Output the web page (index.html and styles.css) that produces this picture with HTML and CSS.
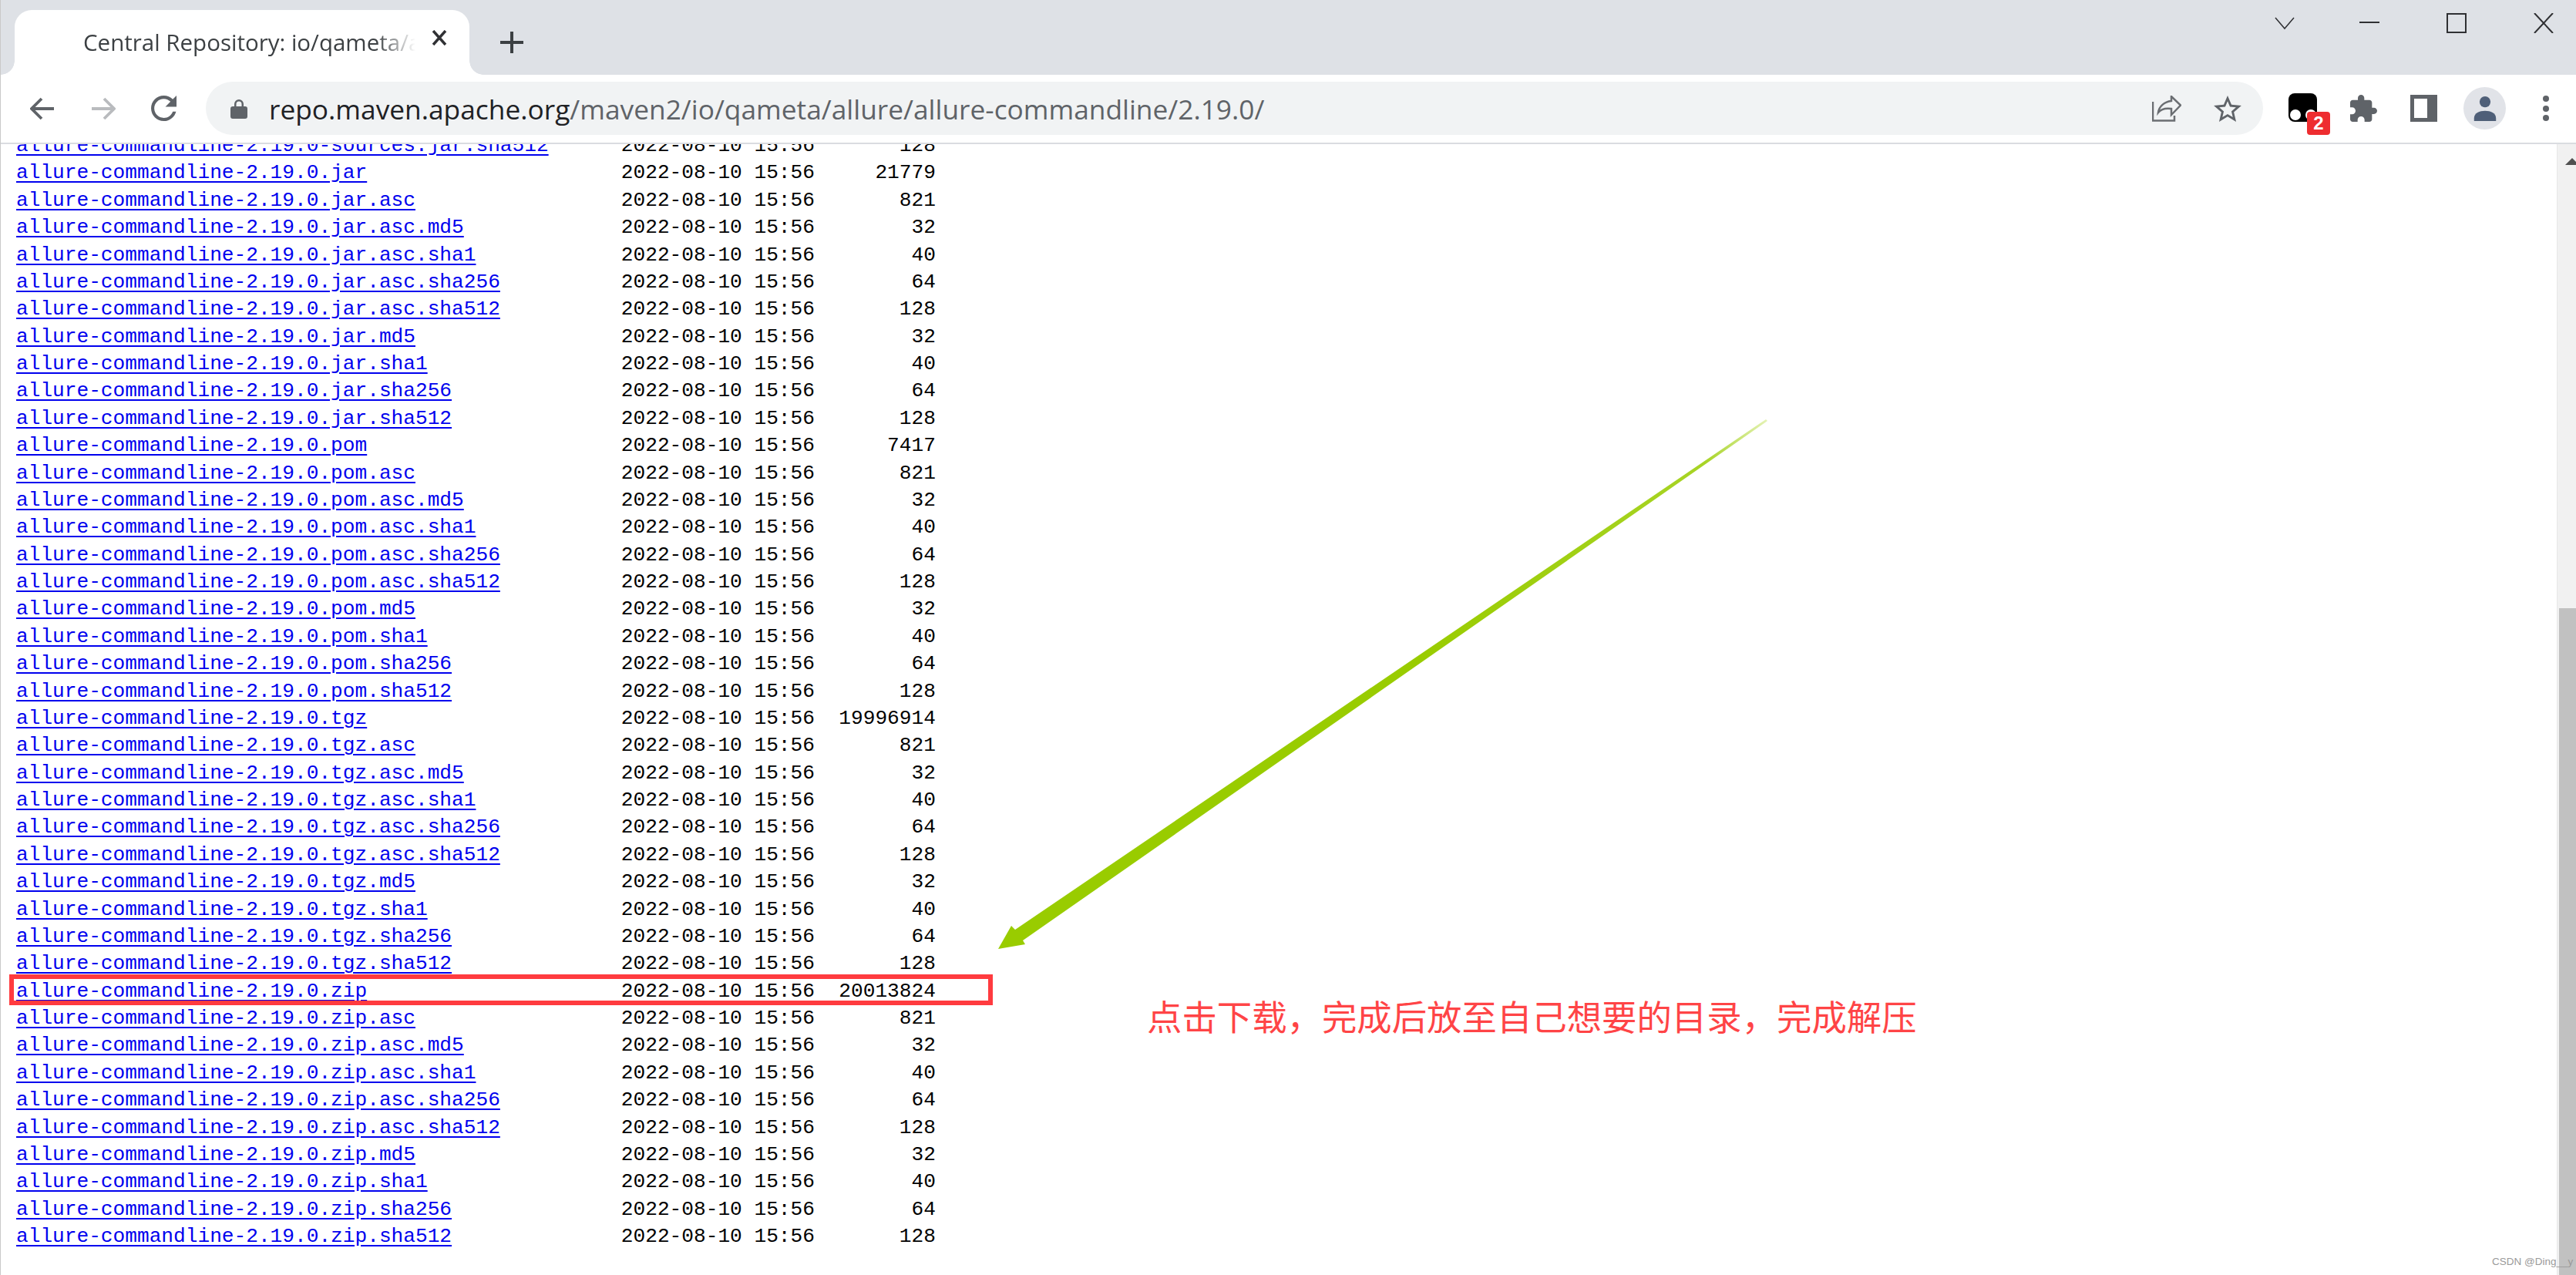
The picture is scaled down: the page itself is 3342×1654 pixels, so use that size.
FILE: index.html
```html
<!DOCTYPE html>
<html lang="en">
<head>
<meta charset="utf-8">
<title>Central Repository: io/qameta/allure/allure-commandline/2.19.0</title>
<link rel="stylesheet" href="styles.css">
</head>
<body>
<div class="app">
  <header class="tabstrip">
    <div class="tab">
      <span class="tab-title">Central Repository: io/qameta/allure</span>
      <svg class="tab-close" viewBox="0 0 20 20"><path d="M2 1 18 19M18 1 2 19"/></svg>
    </div>
    <svg class="new-tab" viewBox="0 0 30 28"><path d="M15 0V28M0 14H30"/></svg>
    <div class="window-controls">
      <svg class="win-icon chev" viewBox="0 0 26 26"><path d="M1 6 13 20 25 6"/></svg>
      <svg class="win-icon" viewBox="0 0 26 26"><path d="M0 12H26"/></svg>
      <svg class="win-icon" viewBox="0 0 26 26"><path d="M1 1H25V25H1Z"/></svg>
      <svg class="win-icon" viewBox="0 0 26 26"><path d="M1 0 25 26M25 0 1 26"/></svg>
    </div>
  </header>
  <nav class="toolbar">
    <div class="nav-group">
      <button class="tool-btn"><svg class="arrow-icon" viewBox="0 0 32 30"><path d="M31 15H3M15 2 2 15 15 28"/></svg></button>
      <button class="tool-btn"><svg class="arrow-icon off" viewBox="0 0 32 30"><path d="M1 15H29M17 2 30 15 17 28"/></svg></button>
      <button class="tool-btn"><svg class="fill-icon reload" viewBox="4 4 16 16"><path d="M17.65 6.35C16.2 4.9 14.21 4 12 4c-4.42 0-7.99 3.58-7.99 8s3.57 8 7.99 8c3.73 0 6.84-2.55 7.73-6h-2.08c-.82 2.33-3.04 4-5.65 4-3.31 0-6-2.69-6-6s2.69-6 6-6c1.66 0 3.14.69 4.22 1.78L13 11h7V4l-2.35 2.35z"/></svg></button>
    </div>
    <div class="omnibox">
      <svg class="fill-icon lock" viewBox="0 0 22 26"><path d="M3 10H5V7A6 6 0 0 1 17 7V10H19A3 3 0 0 1 22 13V23A3 3 0 0 1 19 26H3A3 3 0 0 1 0 23V13A3 3 0 0 1 3 10ZM7.500 10H14.500V7A3.500 3.500 0 0 0 7.500 7Z"/></svg>
      <span class="url"><span class="url-host">repo.maven.apache.org</span>/maven2/io/qameta/allure/allure-commandline/2.19.0/</span>
      <svg class="share" viewBox="0 0 38 34"><path d="M1 8V32.500H29V26"/><path d="M8 22C9 14 16 8 25 7V1L37 12.500 25 25V17C18 16 12 17 8 22Z"/></svg>
      <svg class="fill-icon star" viewBox="2 2 20 19"><path d="M22 9.240l-7.190-.620L12 2 9.190 8.630 2 9.240l5.460 4.730L5.820 21 12 17.270 18.180 21l-1.630-7.030L22 9.240zM12 15.400l-3.760 2.270 1-4.280-3.320-2.880 4.380-.380L12 6.100l1.710 4.040 4.380.380-3.320 2.880 1 4.280L12 15.400z"/></svg>
    </div>
    <div class="actions">
      <button class="tool-btn ext">
        <svg class="ext-logo" viewBox="0 0 37 37"><rect width="37" height="37" rx="8"/><circle class="ext-hole" cx="9" cy="28" r="7"/><circle class="ext-hole" cx="29" cy="28" r="7"/></svg>
        <span class="ext-badge">2</span>
      </button>
      <button class="tool-btn"><svg class="fill-icon puzzle" viewBox="2 1 21 21"><path d="M20.500 11H19V7c0-1.100-.900-2-2-2h-4V3.500C13 2.120 11.880 1 10.500 1S8 2.120 8 3.500V5H4c-1.100 0-1.990.900-1.990 2v3.800H3.500c1.490 0 2.700 1.210 2.700 2.700s-1.210 2.700-2.700 2.700H2V20c0 1.100.900 2 2 2h3.800v-1.500c0-1.490 1.210-2.700 2.700-2.700 1.490 0 2.700 1.210 2.700 2.700V22H17c1.100 0 2-.900 2-2v-4h1.500c1.380 0 2.500-1.120 2.500-2.500S21.880 11 20.500 11z"/></svg></button>
      <button class="tool-btn"><span class="side-panel"></span></button>
      <button class="tool-btn"><span class="avatar"><svg class="avatar-icon" viewBox="0 0 32 36"><circle cx="16" cy="8" r="8"/><path d="M0 36V32C0 24 8 21 16 21S32 24 32 32V36Z"/></svg></span></button>
      <button class="tool-btn"><span class="dots"><i></i><i></i><i></i></span></button>
    </div>
  </nav>
  <main class="viewport">
    <div class="listing">
      <div class="row"><a href="#">allure-commandline-2.19.0-sources.jar.sha512</a><span>2022-08-10 15:56</span><span class="size">128</span></div>
      <div class="row"><a href="#">allure-commandline-2.19.0.jar</a><span>2022-08-10 15:56</span><span class="size">21779</span></div>
      <div class="row"><a href="#">allure-commandline-2.19.0.jar.asc</a><span>2022-08-10 15:56</span><span class="size">821</span></div>
      <div class="row"><a href="#">allure-commandline-2.19.0.jar.asc.md5</a><span>2022-08-10 15:56</span><span class="size">32</span></div>
      <div class="row"><a href="#">allure-commandline-2.19.0.jar.asc.sha1</a><span>2022-08-10 15:56</span><span class="size">40</span></div>
      <div class="row"><a href="#">allure-commandline-2.19.0.jar.asc.sha256</a><span>2022-08-10 15:56</span><span class="size">64</span></div>
      <div class="row"><a href="#">allure-commandline-2.19.0.jar.asc.sha512</a><span>2022-08-10 15:56</span><span class="size">128</span></div>
      <div class="row"><a href="#">allure-commandline-2.19.0.jar.md5</a><span>2022-08-10 15:56</span><span class="size">32</span></div>
      <div class="row"><a href="#">allure-commandline-2.19.0.jar.sha1</a><span>2022-08-10 15:56</span><span class="size">40</span></div>
      <div class="row"><a href="#">allure-commandline-2.19.0.jar.sha256</a><span>2022-08-10 15:56</span><span class="size">64</span></div>
      <div class="row"><a href="#">allure-commandline-2.19.0.jar.sha512</a><span>2022-08-10 15:56</span><span class="size">128</span></div>
      <div class="row"><a href="#">allure-commandline-2.19.0.pom</a><span>2022-08-10 15:56</span><span class="size">7417</span></div>
      <div class="row"><a href="#">allure-commandline-2.19.0.pom.asc</a><span>2022-08-10 15:56</span><span class="size">821</span></div>
      <div class="row"><a href="#">allure-commandline-2.19.0.pom.asc.md5</a><span>2022-08-10 15:56</span><span class="size">32</span></div>
      <div class="row"><a href="#">allure-commandline-2.19.0.pom.asc.sha1</a><span>2022-08-10 15:56</span><span class="size">40</span></div>
      <div class="row"><a href="#">allure-commandline-2.19.0.pom.asc.sha256</a><span>2022-08-10 15:56</span><span class="size">64</span></div>
      <div class="row"><a href="#">allure-commandline-2.19.0.pom.asc.sha512</a><span>2022-08-10 15:56</span><span class="size">128</span></div>
      <div class="row"><a href="#">allure-commandline-2.19.0.pom.md5</a><span>2022-08-10 15:56</span><span class="size">32</span></div>
      <div class="row"><a href="#">allure-commandline-2.19.0.pom.sha1</a><span>2022-08-10 15:56</span><span class="size">40</span></div>
      <div class="row"><a href="#">allure-commandline-2.19.0.pom.sha256</a><span>2022-08-10 15:56</span><span class="size">64</span></div>
      <div class="row"><a href="#">allure-commandline-2.19.0.pom.sha512</a><span>2022-08-10 15:56</span><span class="size">128</span></div>
      <div class="row"><a href="#">allure-commandline-2.19.0.tgz</a><span>2022-08-10 15:56</span><span class="size">19996914</span></div>
      <div class="row"><a href="#">allure-commandline-2.19.0.tgz.asc</a><span>2022-08-10 15:56</span><span class="size">821</span></div>
      <div class="row"><a href="#">allure-commandline-2.19.0.tgz.asc.md5</a><span>2022-08-10 15:56</span><span class="size">32</span></div>
      <div class="row"><a href="#">allure-commandline-2.19.0.tgz.asc.sha1</a><span>2022-08-10 15:56</span><span class="size">40</span></div>
      <div class="row"><a href="#">allure-commandline-2.19.0.tgz.asc.sha256</a><span>2022-08-10 15:56</span><span class="size">64</span></div>
      <div class="row"><a href="#">allure-commandline-2.19.0.tgz.asc.sha512</a><span>2022-08-10 15:56</span><span class="size">128</span></div>
      <div class="row"><a href="#">allure-commandline-2.19.0.tgz.md5</a><span>2022-08-10 15:56</span><span class="size">32</span></div>
      <div class="row"><a href="#">allure-commandline-2.19.0.tgz.sha1</a><span>2022-08-10 15:56</span><span class="size">40</span></div>
      <div class="row"><a href="#">allure-commandline-2.19.0.tgz.sha256</a><span>2022-08-10 15:56</span><span class="size">64</span></div>
      <div class="row"><a href="#">allure-commandline-2.19.0.tgz.sha512</a><span>2022-08-10 15:56</span><span class="size">128</span></div>
      <div class="row"><a href="#">allure-commandline-2.19.0.zip</a><span>2022-08-10 15:56</span><span class="size">20013824</span></div>
      <div class="row"><a href="#">allure-commandline-2.19.0.zip.asc</a><span>2022-08-10 15:56</span><span class="size">821</span></div>
      <div class="row"><a href="#">allure-commandline-2.19.0.zip.asc.md5</a><span>2022-08-10 15:56</span><span class="size">32</span></div>
      <div class="row"><a href="#">allure-commandline-2.19.0.zip.asc.sha1</a><span>2022-08-10 15:56</span><span class="size">40</span></div>
      <div class="row"><a href="#">allure-commandline-2.19.0.zip.asc.sha256</a><span>2022-08-10 15:56</span><span class="size">64</span></div>
      <div class="row"><a href="#">allure-commandline-2.19.0.zip.asc.sha512</a><span>2022-08-10 15:56</span><span class="size">128</span></div>
      <div class="row"><a href="#">allure-commandline-2.19.0.zip.md5</a><span>2022-08-10 15:56</span><span class="size">32</span></div>
      <div class="row"><a href="#">allure-commandline-2.19.0.zip.sha1</a><span>2022-08-10 15:56</span><span class="size">40</span></div>
      <div class="row"><a href="#">allure-commandline-2.19.0.zip.sha256</a><span>2022-08-10 15:56</span><span class="size">64</span></div>
      <div class="row"><a href="#">allure-commandline-2.19.0.zip.sha512</a><span>2022-08-10 15:56</span><span class="size">128</span></div>
    </div>
    <div class="scrollbar">
      <svg class="scroll-up" viewBox="0 0 18 9"><path d="M9 0 18 9H0Z"/></svg>
      <div class="scroll-thumb"></div>
    </div>
  </main>
  <svg class="green-arrow" viewBox="1290 540 1010 695">
    <defs>
      <linearGradient id="arrow-fade" gradientUnits="userSpaceOnUse" x1="1295" y1="1231" x2="2292" y2="545">
        <stop offset="0.55" stop-color="#99cc00"/>
        <stop offset="0.92" stop-color="#a8d426"/>
        <stop offset="1" stop-color="#e4f2b4"/>
      </linearGradient>
    </defs>
    <path fill="url(#arrow-fade)" d="M1295 1231 1312 1201 1317 1206 2291 544 2293 546 1327 1220 1330 1225Z"/>
  </svg>
  <div class="red-box"></div>
  <p class="note">点击下载，完成后放至自己想要的目录，完成解压</p>
  <span class="watermark">CSDN @Ding__y</span>
</div>
</body>
</html>
```
FILE: styles.css
```css
* { box-sizing: border-box; }
html, body { margin: 0; height: 100%; overflow: hidden; background: #fff; }
.app {
  position: relative;
  display: flex;
  flex-direction: column;
  width: 3342px;
  height: 1654px;
  border-left: 1px solid #c9c9c9;
  font-family: "Open Sans", "Noto Sans", sans-serif;
}
svg { display: block; }

/* tab strip */
.tabstrip {
  display: flex;
  align-items: flex-start;
  height: 97px;
  padding: 13px 0 0 18px;
  background: #dee1e6;
  flex: none;
}
.tab {
  position: relative;
  display: flex;
  align-items: center;
  width: 590px;
  height: 84px;
  padding: 0 0 0 89px;
  background: #fff;
  border-radius: 22px 22px 0 0;
}
.tab::before, .tab::after {
  content: "";
  position: absolute;
  bottom: 0;
  width: 18px;
  height: 18px;
}
.tab::before { left: -18px; background: radial-gradient(circle at 0 0, transparent 17.500px, #fff 18px); }
.tab::after { right: -18px; background: radial-gradient(circle at 100% 0, transparent 17.500px, #fff 18px); }
.tab-title {
  width: 431px;
  margin-top: -1px;
  overflow: hidden;
  white-space: nowrap;
  font-size: 29.500px;
  color: #3c4043;
  -webkit-mask-image: linear-gradient(90deg, #000 88%, transparent 100%);
  mask-image: linear-gradient(90deg, #000 88%, transparent 100%);
}
.tab-close {
  width: 20px;
  height: 20px;
  margin: -13px 0 0 21px;
  fill: none;
  stroke: #303134;
  stroke-width: 3.500;
}
.new-tab {
  width: 30px;
  height: 28px;
  margin: 28px 0 0 40px;
  fill: none;
  stroke: #3c4043;
  stroke-width: 4;
}
.window-controls {
  display: flex;
  gap: 87px;
  margin: 4px 29px 0 auto;
}
.win-icon {
  width: 26px;
  height: 26px;
  fill: none;
  stroke: #2f3033;
  stroke-width: 2;
}
.chev { margin-right: -3px; stroke-width: 1.500; }

/* toolbar */
.toolbar {
  display: flex;
  align-items: center;
  flex: none;
  height: 90px;
  padding: 0 0 1px 14px;
  background: #fff;
  border-bottom: 2px solid #dadce0;
}
.nav-group, .actions { display: flex; align-items: center; flex: none; }
.tool-btn {
  position: relative;
  display: flex;
  align-items: center;
  justify-content: center;
  width: 79px;
  height: 79px;
  padding: 0;
  border: 0;
  background: none;
}
.arrow-icon {
  width: 32px;
  height: 30px;
  fill: none;
  stroke: #5f6368;
  stroke-width: 3.800;
}
.arrow-icon.off { stroke: #b9bbbe; }
.fill-icon { fill: #5f6368; }
.reload { width: 35px; height: 33px; }
.omnibox {
  display: flex;
  align-items: center;
  flex: 1;
  height: 69px;
  margin: 0 12px 0 15px;
  padding: 0 28px 0 32px;
  background: #f1f3f4;
  border-radius: 35px;
}
.lock { width: 22px; height: 26px; flex: none; }
.url {
  margin-left: 28px;
  font-size: 35.300px;
  white-space: nowrap;
  color: #5f6368;
}
.url-host { color: #202124; }
.share {
  width: 38px;
  height: 34px;
  margin-left: auto;
  fill: none;
  stroke: #6b6e72;
  stroke-width: 2.500;
}
.star { width: 36px; height: 34px; margin-left: 42px; fill: #5f6368; }

.actions { width: 394px; }
.ext-logo { width: 37px; height: 37px; margin: -2px 0 0 0; fill: #000; }
.ext-logo .ext-hole { fill: #fff; }
.ext-badge {
  position: absolute;
  left: 45px;
  top: 44px;
  width: 30px;
  height: 30px;
  border-radius: 4px;
  background: #ee2d30;
  color: #fff;
  font: 700 24px/30px "Liberation Sans", sans-serif;
  text-align: center;
}
.puzzle { width: 35px; height: 35px; }
.side-panel {
  width: 35px;
  height: 35px;
  border: solid #5f6368;
  border-width: 5px 13px 5px 5px;
  background: #fff;
}
.avatar {
  display: flex;
  align-items: center;
  justify-content: center;
  width: 55px;
  height: 55px;
  border-radius: 50%;
  background: #e1e3e8;
}
.avatar-icon { width: 32px; height: 32px; fill: #4f5f78; }
.dots { display: flex; flex-direction: column; gap: 4.500px; }
.dots i { width: 8px; height: 8px; border-radius: 50%; background: #5f6368; }

/* page */
.viewport { display: flex; flex: 1; min-height: 0; overflow: hidden; }
.listing {
  flex: 1;
  min-width: 0;
  margin-top: -15px;
  padding-left: 20px;
  font-family: "Liberation Mono", monospace;
  font-size: 26.170px;
  line-height: 35.380px;
  color: #000;
}
.row { display: grid; grid-template-columns: 50ch 16ch 10ch; white-space: pre; }
.row a { color: #0000ee; text-decoration: underline; text-underline-offset: 4px; }
.size { text-align: right; }
.scrollbar {
  display: flex;
  flex-direction: column;
  justify-content: space-between;
  flex: none;
  width: 25px;
  overflow: hidden;
  background: #f1f1f1;
  border-left: 1px solid #e8e8e8;
}
.scroll-up {
  flex: none;
  width: 18px;
  height: 9px;
  margin: 18px 0 0 10px;
  fill: #505050;
}
.scroll-thumb { flex: none; height: 865px; margin-left: 2px; background: #c1c1c1; }

/* annotations drawn over the page */
.green-arrow {
  position: absolute;
  left: 1289px;
  top: 540px;
  width: 1010px;
  height: 695px;
}
.red-box {
  position: absolute;
  left: 11px;
  top: 1264px;
  width: 1276px;
  height: 40px;
  border: 6px solid #ff3b3f;
}
.note {
  position: absolute;
  left: 1487px;
  top: 1282px;
  margin: 0;
  font-family: "Noto Sans CJK SC", sans-serif;
  font-size: 45.400px;
  line-height: 70px;
  white-space: nowrap;
  color: #ff4446;
}
.watermark {
  position: absolute;
  left: 3232px;
  top: 1629px;
  font-family: "Liberation Sans", sans-serif;
  font-size: 13.500px;
  line-height: 16px;
  color: #9a9a9a;
}
```
